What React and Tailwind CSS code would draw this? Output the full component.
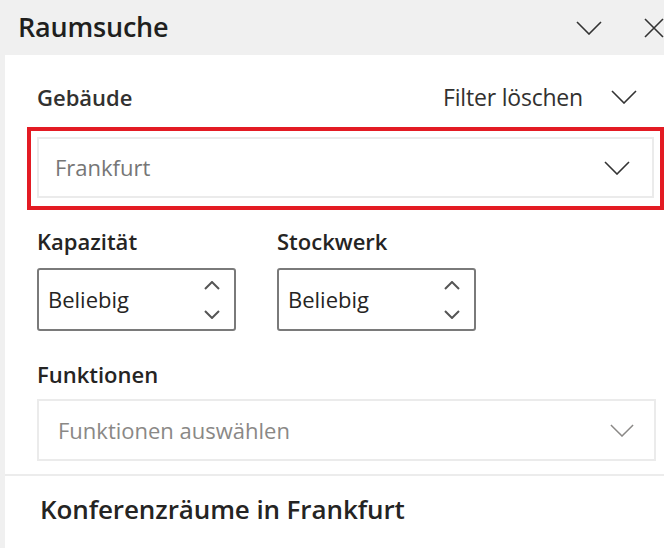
const Chevron = ({ className }) => (
  <svg viewBox="0 0 26 14" className={className} fill="none" stroke="currentColor" strokeWidth="1.6">
    <path d="M1 1 L13 13 L25 1" />
  </svg>
);

const SmallChevron = ({ up, className }) => (
  <svg viewBox="0 0 16 9" className={className} fill="none" stroke="currentColor" strokeWidth="2">
    <path d={up ? "M1 8 L8 1 L15 8" : "M1 1 L8 8 L15 1"} />
  </svg>
);

const Spinner = ({ label }) => (
  <div className="flex flex-col">
    <div className="h-[30px] flex items-center text-[22px] font-semibold text-[#252423]">{label}</div>
    <div className="mt-[12px] w-[199px] h-[63px] rounded-[3px] border-2 border-[#7a7a7a] flex items-center pl-[9px] pr-[14px]">
      <span className="text-[22px] text-[#252423]">Beliebig</span>
      <div className="ml-auto flex flex-col gap-[20px] text-[#555]">
        <SmallChevron up className="w-[16px] h-[9px]" />
        <SmallChevron className="w-[16px] h-[9px]" />
      </div>
    </div>
  </div>
);

const App = () => {
  return (
    <div className="w-[664px] h-[548px] overflow-hidden bg-[#f0f0f0] font-['Open_Sans','Noto_Sans',sans-serif] flex flex-col">
      <div className="h-[55px] shrink-0 flex items-center pl-[18px]">
        <h1 className="text-[27px] font-semibold text-[#201f1e] tracking-[-0.2px]">Raumsuche</h1>
        <Chevron className="ml-auto w-[26px] h-[14px] text-[#333]" />
        <svg viewBox="0 0 20 20" className="ml-[42px] w-[20px] h-[20px] shrink-0 text-[#333]" fill="none" stroke="currentColor" strokeWidth="1.6">
          <path d="M1 1 L19 19 M19 1 L1 19" />
        </svg>
      </div>

      <div className="ml-[5px] flex-1 bg-white w-[680px] flex flex-col">
        <div className="mt-[20px] h-[44px] flex items-center pl-[32px] w-[632px]">
          <span className="text-[22px] font-semibold text-[#323130]">Gebäude</span>
          <span className="ml-auto text-[23px] text-[#323130] tracking-[-0.2px]">Filter löschen</span>
          <Chevron className="ml-[28px] w-[26px] h-[14px] text-[#333]" />
        </div>

        <div className="mt-[8px] ml-[22px] w-[637px] h-[83px] border-4 border-[#e31b23] p-[6px]">
          <div className="h-[61px] w-full border-2 border-[#ebebeb] flex items-center pl-[16px] pr-[22px]">
            <span className="text-[22px] text-[#767676]">Frankfurt</span>
            <Chevron className="ml-auto w-[26px] h-[14px] text-[#333]" />
          </div>
        </div>

        <div className="mt-[16px] pl-[32px] flex gap-[41px]">
          <Spinner label="Kapazität" />
          <Spinner label="Stockwerk" />
        </div>

        <div className="mt-[28px] pl-[32px] h-[30px] flex items-center text-[22px] font-semibold text-[#252423]">
          Funktionen
        </div>
        <div className="mt-[10px] ml-[32px] w-[619px] h-[62px] border-2 border-[#ebebeb] flex items-center pl-[19px] pr-[20px]">
          <span className="text-[22px] text-[#8a8886]">Funktionen auswählen</span>
          <Chevron className="ml-auto w-[24px] h-[13px] text-[#8a8886]" />
        </div>

        <div className="mt-[13px] h-[2px] bg-[#ececec]" />

        <div className="mt-[14px] pl-[35px] text-[26px] font-semibold text-[#252423] tracking-[-0.1px]">
          Konferenzräume in Frankfurt
        </div>
      </div>
    </div>
  );
};

export default App;
